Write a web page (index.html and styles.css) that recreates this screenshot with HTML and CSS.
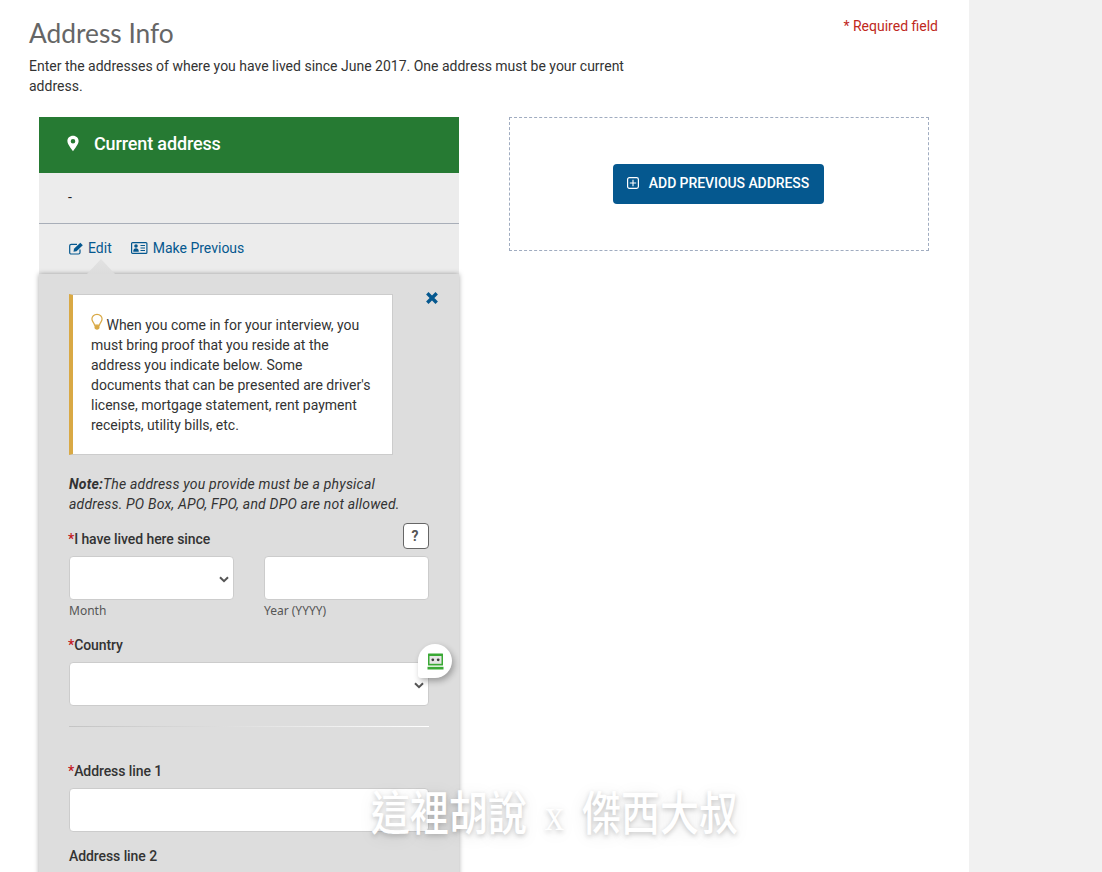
FILE: index.html
```html
<!DOCTYPE html>
<html lang="en">
<head>
<meta charset="utf-8">
<title>Address Info</title>
<link rel="stylesheet" href="styles.css">
</head>
<body>
<div class="shell">
  <main class="page">
    <header class="top">
      <h1 class="title">Address Info</h1>
      <span class="required">* Required field</span>
    </header>
    <p class="intro">Enter the addresses of where you have lived since June 2017. One address must be your current address.</p>
    <div class="cols">
      <section class="card">
        <div class="card-head">
          <svg class="pin" width="12" height="17" viewBox="0 0 12 16"><path fill="#fff" fill-rule="evenodd" d="M6 0.200C2.700 0.200 0.400 2.600 0.400 5.600 0.400 8.800 3.800 12.600 6 15.800 8.200 12.600 11.600 8.800 11.600 5.600 11.600 2.600 9.300 0.200 6 0.200ZM6 3.400A2.300 2.300 0 1 1 6 8 2.300 2.300 0 0 1 6 3.400Z"/></svg>
          <span class="card-title">Current address</span>
        </div>
        <div class="card-addr">-</div>
        <div class="card-actions">
          <a class="action">
            <svg width="15" height="13" viewBox="0 0 15 13"><path fill="none" stroke="#05588f" stroke-width="1.200" d="M11 7.500V10.500C11 11.500 10.400 12 9.500 12H2.300C1.300 12 0.700 11.500 0.700 10.500V3.800C0.700 2.800 1.300 2.300 2.300 2.300H8"/><path fill="#05588f" d="M5 6.700 11.300 0.800 13.800 3.200 7.500 9.300 4.500 9.800Z"/></svg>
            Edit
          </a>
          <a class="action">
            <svg width="17" height="12" viewBox="0 0 17 12"><rect x="0.600" y="0.600" width="15.300" height="10.800" rx="1" fill="none" stroke="#05588f" stroke-width="1.200"/><circle cx="5" cy="4" r="1.800" fill="#05588f"/><path fill="#05588f" d="M2.200 9.800C2.200 7 3.500 6.300 5 6.300S7.800 7 7.800 9.800Z"/><path stroke="#05588f" d="M9.500 3.500H14M9.500 6H14M9.500 8.500H14"/></svg>
            Make Previous
          </a>
        </div>
        <div class="panel">
          <span class="panel-arrow"></span>
          <div class="panel-top">
            <div class="tip">
              <svg class="bulb" width="12" height="18" viewBox="0 0 13 18"><path fill="none" stroke="#d9a945" stroke-width="1.300" d="M6.500 0.800C3.200 0.800 1 3 1 5.800 1 8.500 3.300 9.800 3.800 12.300H9.200C9.700 9.800 12 8.500 12 5.800 12 3 9.800 0.800 6.500 0.800Z"/><path fill="#d9a945" d="M3.800 12.500H9.200V15C9.200 16.400 8 17.300 6.500 17.300S3.800 16.400 3.800 15Z"/></svg>
              When you come in for your interview, you must bring proof that you reside at the address you indicate below. Some documents that can be presented are driver's license, mortgage statement, rent payment receipts, utility bills, etc.
            </div>
            <svg class="close" width="14" height="14" viewBox="0 0 14 14"><path stroke="#05588f" stroke-width="3.400" d="M2.300 2.300 11.700 11.700M11.700 2.300 2.300 11.700"/></svg>
          </div>
          <p class="note"><b>Note:</b>The address you provide must be a physical address. PO Box, APO, FPO, and DPO are not allowed.</p>
          <div class="since-row">
            <label class="label"><span class="star">*</span>I have lived here since</label>
            <button class="help" type="button">?</button>
          </div>
          <div class="date-row">
            <div class="date-field">
              <div class="box">
                <svg class="chev" width="10" height="7" viewBox="0 0 10 7"><path fill="none" stroke="#555" stroke-width="2" d="M1 1.200 5 5.200 9 1.200"/></svg>
              </div>
              <div class="hint">Month</div>
            </div>
            <div class="date-field">
              <div class="box"></div>
              <div class="hint">Year (YYYY)</div>
            </div>
          </div>
          <label class="label country-label"><span class="star">*</span>Country</label>
          <div class="box wide">
            <svg class="chev" width="10" height="7" viewBox="0 0 10 7"><path fill="none" stroke="#555" stroke-width="2" d="M1 1.200 5 5.200 9 1.200"/></svg>
            <span class="robo">
              <svg width="17" height="17" viewBox="0 0 17 17"><rect x="1" y="0.500" width="15" height="12" rx="0.500" fill="#3aa935"/><rect x="2.500" y="3" width="12" height="7.800" fill="#e6e6e6"/><circle cx="5.800" cy="6.800" r="1.400" fill="#3d3d3d"/><circle cx="11.200" cy="6.800" r="1.400" fill="#3d3d3d"/><rect x="0.500" y="13.800" width="16" height="2.700" fill="#3aa935"/></svg>
            </span>
          </div>
          <hr class="rule">
          <label class="label addr1-label"><span class="star">*</span>Address line 1</label>
          <div class="box wide"></div>
          <label class="label addr2-label">Address line 2</label>
        </div>
      </section>
      <section class="add-box">
        <button class="add-btn" type="button">
          <svg width="12" height="12" viewBox="0 0 12 12"><rect x="0.600" y="0.600" width="10.800" height="10.800" rx="1.800" fill="none" stroke="#fff" stroke-width="1.200"/><path stroke="#fff" stroke-width="1.100" d="M6 2.800V9.200M2.800 6H9.200"/></svg>
          ADD PREVIOUS ADDRESS
        </button>
      </section>
    </div>
  </main>
  <aside class="rail"></aside>
</div>
<div class="watermark">這裡胡說 x 傑西大叔</div>
</body>
</html>
```

FILE: styles.css
```css
* { box-sizing: border-box; }
html, body { margin: 0; height: 872px; overflow: hidden; }
body { font-family: Roboto, "Liberation Sans", sans-serif; font-size: 14px; line-height: 20px; color: #333; background: #fff; position: relative; }
.shell { display: flex; height: 872px; overflow: hidden; }
.page { width: 969px; flex: none; padding: 18px 31px 0 29px; background: #fff; }
.rail { flex: 1; background: #f1f1f1; }
.top { display: flex; justify-content: space-between; align-items: flex-start; }
.title { margin: 0; font-family: Lato, "Noto Sans", sans-serif; font-weight: 400; font-size: 26.300px; line-height: 30px; color: #666; }
.required { color: #c0281c; line-height: 16px; }
.intro { margin: 8px 0 0; width: 610px; line-height: 20px; color: #333; }
.cols { display: flex; align-items: flex-start; margin: 21px 0 0 10px; gap: 50px; }
.card { width: 420px; flex: none; background: #ececec; }
.card-head { height: 56px; background: #267a33; color: #fff; font-size: 18px; font-weight: 500; display: flex; align-items: center; padding: 0 0 3px 28px; gap: 15px; }
.card-title { letter-spacing: -.14px; }
.pin { flex: none; }
.card-addr { height: 51px; padding: 14px 29px 0; border-bottom: 1px solid #a8aeb8; color: #222; }
.card-actions { height: 50px; display: flex; gap: 19px; padding: 14px 30px 0; }
.action { color: #05588f; display: flex; align-items: center; gap: 5px; height: 20px; }
.action:first-child { gap: 4px; }
.panel { position: relative; background: #ddd; box-shadow: 0 0 5px rgba(0,0,0,.35); padding: 20px 30px 0; }
.panel-arrow { position: absolute; left: 48px; top: -15px; width: 28px; height: 15px; background: linear-gradient(#e2e2e2, #dcdcdc); clip-path: polygon(50% 0, 100% 100%, 0 100%); }
.panel-top { display: flex; justify-content: space-between; align-items: flex-start; }
.tip { width: 324px; height: 161px; background: #fff; border: 1px solid #ccc; border-left: 4px solid #d9a945; padding: 18px 18px 0; }
.bulb { vertical-align: -1px; }
.close { margin-top: -3px; margin-right: -10px; }
.note { margin: 19px 0 0; width: 345px; font-style: italic; letter-spacing: .19px; }
.note b { font-weight: 700; }
.since-row { display: flex; justify-content: space-between; align-items: flex-end; margin-top: 9px; }
.label { display: block; font-weight: 500; color: #333; letter-spacing: -.08px; }
.star { color: #c4161c; margin-left: -1px; }
.help { width: 26px; height: 26px; padding: 0 2px 0 0; border: 1px solid #666; border-radius: 4px; background: #fff; font: 700 14px/20px Roboto, sans-serif; color: #555; }
.date-row { display: flex; gap: 30px; margin-top: 7px; }
.date-field { flex: 1; }
.box { position: relative; height: 44px; background: #fff; border: 1px solid #ccc; border-radius: 4px; }
.box.wide { width: 360px; }
.chev { position: absolute; right: 4px; top: 19px; }
.hint { font-family: "Noto Sans", sans-serif; font-size: 12px; line-height: 21px; height: 21px; color: #555; }
.country-label { margin-top: 14px; }
.country-label + .box { margin-top: 7px; }
.robo { position: absolute; right: -24px; top: -19px; width: 34px; height: 34px; background: #fff; border-radius: 50% 50% 50% 3px; box-shadow: 2px 3px 6px rgba(0,0,0,.3); display: flex; align-items: center; justify-content: center; }
.rule { width: 360px; height: 1px; margin: 20px 0 0; border: 0; background: linear-gradient(90deg, #c4c4c4, #fff); }
.addr1-label { margin-top: 34px; }
.addr1-label + .box { margin-top: 7px; }
.addr2-label { margin-top: 14px; padding-bottom: 30px; }
.add-box { width: 420px; height: 134px; border: 1px dashed #a0acc0; display: flex; justify-content: center; align-items: center; padding-right: 2px; }
.add-btn { height: 40px; width: 211px; border: 0; border-radius: 4px; background: #05588f; color: #fff; font: 500 14px/20px Roboto, sans-serif; letter-spacing: -.07px; display: flex; align-items: center; justify-content: center; gap: 10px; padding: 0 0 2px; }
.watermark { position: absolute; left: 371px; top: 781px; white-space: nowrap; font-family: "Liberation Serif", "Noto Sans CJK TC", serif; font-size: 39px; line-height: 66px; font-weight: 500; word-spacing: 8px; color: #fff; transform: scaleY(1.2); transform-origin: 50% 50%; text-shadow: 0 2px 5px rgba(0,0,0,.2), 0 3px 16px rgba(0,0,0,.1); }
```
